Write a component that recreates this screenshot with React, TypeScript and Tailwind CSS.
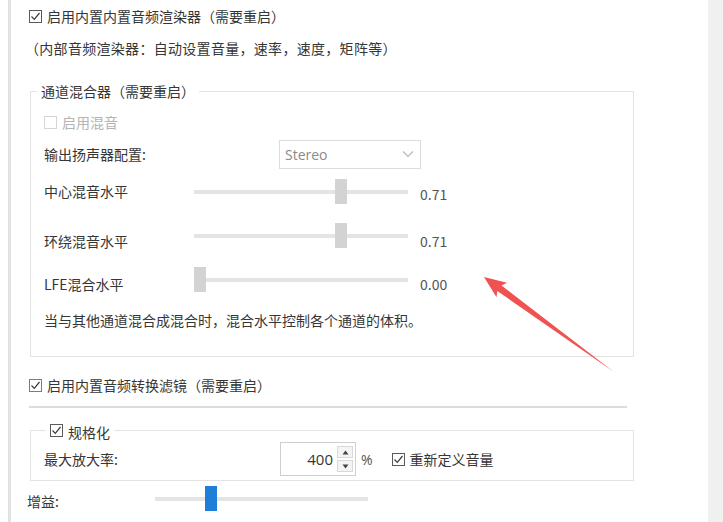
import React from "react";

const FONT = { fontFamily: '"Noto Sans CJK SC", "Noto Sans", sans-serif' };

function Check({ checked = false, tone = "dark" }: { checked?: boolean; tone?: "dark" | "blue" | "disabled" }) {
  const border =
    tone === "blue" ? "border-[#3f8ad8]" : tone === "disabled" ? "border-[#d6d6d6]" : "border-[#5a5a5a]";
  return (
    <span className={`flex h-[13px] w-[13px] shrink-0 items-center justify-center border bg-white ${border}`}>
      {checked && (
        <svg width="11" height="11" viewBox="0 0 11 11">
          <polyline points="1.5,5.5 4.3,8.3 9.5,2" fill="none" stroke="#3a3a3a" strokeWidth="1.2" />
        </svg>
      )}
    </span>
  );
}

function Slider({ value, blue = false, widthClass, trackWidth }: { value: number; blue?: boolean; widthClass: string; trackWidth: number }) {
  const left = Math.round(value * (trackWidth - 12));
  return (
    <div className={`relative h-[25px] ${widthClass}`}>
      <div className="absolute left-0 right-0 top-[11px] h-[4px] bg-[#e4e4e4]" />
      <div
        className={`absolute top-0 h-[25px] w-[12px] ${blue ? "bg-[#1f7fd8]" : "bg-[#d3d3d3]"}`}
        style={{ left }}
      />
    </div>
  );
}

export default function App() {
  return (
    <div className="relative flex h-[522px] w-[723px] overflow-hidden bg-white text-[14px] text-[#363636]" style={FONT}>
      <div className="w-[8px] shrink-0" />
      <div className="w-[3px] shrink-0 bg-[#e2e2e2]" />
      <div className="flex min-w-0 flex-1 flex-col pt-[6px]">
        {/* Row 1 */}
        <div className="flex h-[20px] items-center gap-[5px] pl-[18px] leading-[20px]">
          <Check checked />
          <span>启用内置内置音频渲染器（需要重启）</span>
        </div>
        {/* Row 2 */}
        <div className="mt-[12px] flex h-[20px] items-center pl-[14px] leading-[20px]">
          <span className="tracking-[0.3px]">（内部音频渲染器：自动设置音量，速率，速度，矩阵等）</span>
        </div>

        {/* Group 1 */}
        <fieldset className="ml-[19px] mt-[23px] w-[604px] border border-[#e3e3e3] p-0">
          <legend className="ml-[6px] h-[20px] px-[4px] leading-[20px]">通道混合器（需要重启）</legend>
          <div className="flex flex-col pb-[26px] pl-[13px] pt-[10px]">
            <div className="flex h-[22px] items-center gap-[5px] text-[#b4b4b4]">
              <Check tone="disabled" />
              <span>启用混音</span>
            </div>
            <div className="mt-[6px] flex h-[30px] items-center">
              <span className="w-[235px]">输出扬声器配置:</span>
              <div className="flex h-[29px] w-[142px] items-center justify-between border border-[#dcdcdc] pl-[5px] pr-[6px] text-[#8a8a8a]" style={{ fontFamily: '"Open Sans", "Noto Sans", sans-serif' }}>
                <span>Stereo</span>
                <svg width="12" height="8" viewBox="0 0 12 8">
                  <polyline points="1,1.5 6,6.5 11,1.5" fill="none" stroke="#b8b8b8" strokeWidth="1.1" />
                </svg>
              </div>
            </div>
            <div className="flex h-[44px] items-center">
              <span className="w-[150px]">中心混音水平</span>
              <Slider value={0.7} widthClass="w-[214px]" trackWidth={214} />
              <span className="ml-[12px] pt-[6px] text-[#555]">0.71</span>
            </div>
            <div className="flex h-[44px] items-center">
              <span className="w-[150px] pt-[12px]">环绕混音水平</span>
              <Slider value={0.7} widthClass="w-[214px]" trackWidth={214} />
              <span className="ml-[12px] pt-[12px] text-[#555]">0.71</span>
            </div>
            <div className="flex h-[44px] items-center">
              <span className="w-[150px] pt-[10px]">LFE混合水平</span>
              <Slider value={0} widthClass="w-[214px]" trackWidth={214} />
              <span className="ml-[12px] pt-[10px] text-[#555]">0.00</span>
            </div>
            <div className="mt-[9px] flex h-[20px] items-center leading-[20px]">
              当与其他通道混合成混合时，混合水平控制各个通道的体积。
            </div>
          </div>
        </fieldset>

        {/* Filter checkbox */}
        <div className="mt-[18px] flex h-[20px] items-center gap-[5px] pl-[18px] leading-[20px]">
          <Check checked tone="blue" />
          <span>启用内置音频转换滤镜（需要重启）</span>
        </div>
        <div className="ml-[18px] mt-[11px] h-[2px] w-[598px] bg-[#dcdcdc]" />

        {/* Group 2 */}
        <fieldset className="ml-[19px] mt-[12px] w-[604px] border border-[#e3e3e3] p-0">
          <legend className="ml-[15px] flex h-[20px] items-center gap-[5px] px-[4px] leading-[20px]">
            <Check checked />
            <span className="pt-[3px]">规格化</span>
          </legend>
          <div className="flex flex-col pb-[4px] pl-[13px] pt-[2px]">
            <div className="flex h-[34px] items-center">
              <span className="w-[236px]">最大放大率:</span>
              <div className="flex h-[34px] w-[76px] items-center border border-[#cfcfcf] bg-white">
                <span className="flex-1 pr-[4px] text-right text-[15px]" style={{ fontFamily: '"Open Sans", sans-serif' }}>400</span>
                <div className="mr-[2px] flex h-[26px] w-[16px] flex-col gap-[2px]">
                  <div className="flex flex-1 items-center justify-center border border-[#d8d8d8] bg-[#f4f4f4]">
                    <svg width="7" height="5" viewBox="0 0 7 5"><polygon points="3.5,0.5 6.5,4.5 0.5,4.5" fill="#444" /></svg>
                  </div>
                  <div className="flex flex-1 items-center justify-center border border-[#d8d8d8] bg-[#f4f4f4]">
                    <svg width="7" height="5" viewBox="0 0 7 5"><polygon points="0.5,0.5 6.5,0.5 3.5,4.5" fill="#444" /></svg>
                  </div>
                </div>
              </div>
              <span className="ml-[5px] text-[#555]" style={{ fontFamily: '"Open Sans", sans-serif' }}>%</span>
              <div className="ml-[19px] flex items-center gap-[5px]">
                <Check checked />
                <span>重新定义音量</span>
              </div>
            </div>
          </div>
        </fieldset>

        {/* Gain */}
        <div className="mt-[2px] flex h-[30px] items-center pl-[16px]">
          <span className="w-[128px] pt-[6px]">增益:</span>
          <Slider value={0.25} blue widthClass="w-[213px]" trackWidth={213} />
        </div>
      </div>
      <div className="w-[15px] shrink-0 bg-[#f0f0f0]" />

      {/* Red annotation arrow */}
      <svg className="pointer-events-none absolute left-0 top-0" width="723" height="522" viewBox="0 0 723 522">
        <polygon
          points="484,277 507,282.7 501.5,285.4 614,372 497.3,291 496.5,297.3"
          fill="#f05252"
        />
      </svg>
    </div>
  );
}
